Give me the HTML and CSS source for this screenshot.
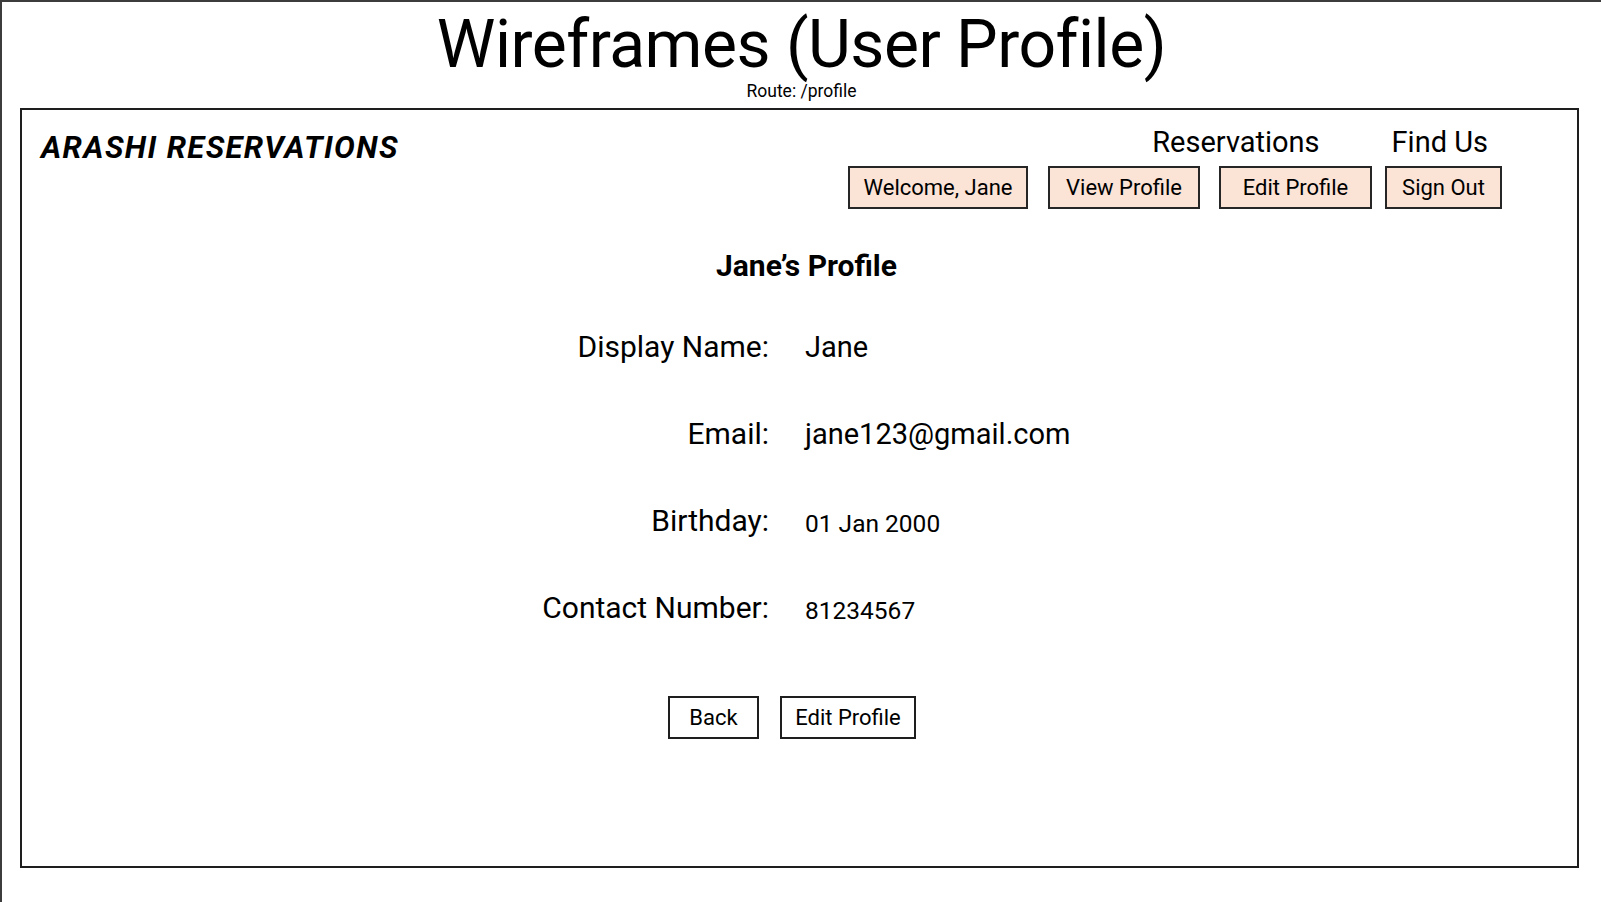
FILE: index.html
```html
<!DOCTYPE html>
<html lang="en">
<head>
<meta charset="utf-8">
<title>Wireframes (User Profile)</title>
<link rel="stylesheet" href="styles.css">
</head>
<body>
<div class="sheet">
  <header class="sheet-head">
    <h1 class="sheet-title">Wireframes (User Profile)</h1>
    <div class="route">Route: /profile</div>
  </header>
  <section class="frame">
    <div class="topbar">
      <div class="brand">ARASHI RESERVATIONS</div>
      <nav class="nav">
        <div class="nav-links">
          <span class="nav-link">Reservations</span>
          <span class="nav-link">Find Us</span>
        </div>
        <div class="nav-buttons">
          <span class="nav-btn w-welcome">Welcome, Jane</span>
          <span class="nav-btn w-view">View Profile</span>
          <span class="nav-btn w-edit">Edit Profile</span>
          <span class="nav-btn w-sign">Sign Out</span>
        </div>
      </nav>
    </div>
    <h2 class="profile-title">Jane’s Profile</h2>
    <div class="profile-grid">
      <div class="label">Display Name:</div>
      <div class="value">Jane</div>
      <div class="label">Email:</div>
      <div class="value">jane123@gmail.com</div>
      <div class="label">Birthday:</div>
      <div class="value small">01 Jan 2000</div>
      <div class="label">Contact Number:</div>
      <div class="value small">81234567</div>
    </div>
    <div class="actions">
      <span class="btn w-back">Back</span>
      <span class="btn w-edit2">Edit Profile</span>
    </div>
  </section>
</div>
</body>
</html>
```
FILE: styles.css
```css
* { box-sizing: border-box; }

html, body {
  margin: 0;
  padding: 0;
  background: #fff;
  overflow: hidden;
}

body {
  font-family: Roboto, "Liberation Sans", sans-serif;
  color: #000;
}

.sheet {
  width: 1601px;
  height: 902px;
  border-top: 2px solid #3c3c3c;
  border-left: 2px solid #3c3c3c;
}

.sheet-head {
  display: flex;
  flex-direction: column;
  align-items: center;
  padding-top: 8px;
}

.sheet-title {
  margin: 0;
  font-weight: 400;
  font-size: 66px;
  line-height: 70px;
  letter-spacing: -0.5px;
}

.route {
  font-size: 17.5px;
  line-height: 20px;
  margin-top: 1px;
}

.frame {
  margin-left: 18px;
  margin-top: 7px;
  width: 1559px;
  height: 760px;
  border: 2px solid #1e1e1e;
  display: flex;
  flex-direction: column;
}

.topbar {
  display: flex;
  justify-content: space-between;
  align-items: flex-start;
  padding: 15px 75px 0 19px;
}

.brand {
  margin-top: 3px;
  font-size: 31px;
  line-height: 40px;
  font-weight: 700;
  font-style: italic;
  letter-spacing: 1.4px;
}

.nav {
  display: flex;
  flex-direction: column;
  align-items: flex-end;
}

.nav-links {
  display: flex;
  gap: 72px;
  padding-right: 14px;
}

.nav-link {
  font-size: 29px;
  line-height: 34px;
}

.nav-buttons {
  display: flex;
  margin-top: 7px;
}

.nav-btn {
  height: 43px;
  display: flex;
  align-items: center;
  justify-content: center;
  background: #fbe3d6;
  border: 2px solid #262626;
  font-size: 22px;
}

.w-welcome { width: 180px; margin-right: 20px; }
.w-view { width: 152px; margin-right: 19px; }
.w-edit { width: 153px; margin-right: 13px; }
.w-sign { width: 117px; }

.profile-title {
  margin: 39px 0 0 14px;
  text-align: center;
  font-size: 30px;
  line-height: 36px;
  font-weight: 700;
}

.profile-grid {
  margin-top: 19px;
  display: grid;
  grid-template-columns: 747px 1fr;
  grid-auto-rows: 87px;
  column-gap: 36px;
  align-items: center;
}

.label {
  text-align: right;
  font-size: 30px;
  line-height: 36px;
}

.value {
  font-size: 29px;
  line-height: 36px;
}

.value.small {
  font-size: 24.5px;
  padding-top: 6px;
}

.actions {
  margin-top: 45px;
  display: flex;
  justify-content: center;
  gap: 21px;
  padding-right: 15px;
}

.btn {
  height: 43px;
  display: flex;
  align-items: center;
  justify-content: center;
  border: 2px solid #1e1e1e;
  font-size: 22px;
}

.w-back { width: 91px; }
.w-edit2 { width: 136px; }
```
